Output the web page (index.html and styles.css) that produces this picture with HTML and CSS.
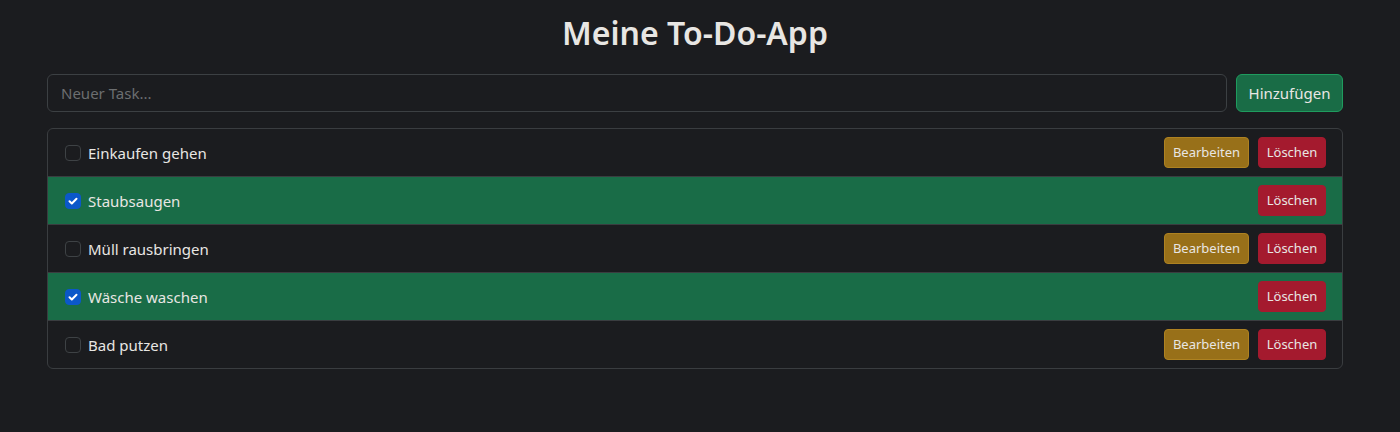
FILE: index.html
```html
<!DOCTYPE html>
<html lang="de">
<head>
<meta charset="utf-8">
<title>Meine To-Do-App</title>
<link rel="stylesheet" href="styles.css">
</head>
<body>
<div class="container">
  <h2 class="title">Meine To-Do-App</h2>
  <div class="add-row">
    <input class="task-input" type="text" placeholder="Neuer Task...">
    <button class="btn btn-success">Hinzufügen</button>
  </div>
  <ul class="list">
    <li class="item">
      <label class="item-label"><span class="check"></span><span class="item-text">Einkaufen gehen</span></label>
      <div class="actions"><button class="btn btn-sm btn-warning">Bearbeiten</button><button class="btn btn-sm btn-danger">Löschen</button></div>
    </li>
    <li class="item done">
      <label class="item-label"><span class="check checked"><svg viewBox="0 0 16 16" width="16" height="16"><path d="M4.5 8.2l2.3 2.3 4.7-4.8" fill="none" stroke="#fff" stroke-width="2" stroke-linecap="round" stroke-linejoin="round"/></svg></span><span class="item-text">Staubsaugen</span></label>
      <div class="actions"><button class="btn btn-sm btn-danger">Löschen</button></div>
    </li>
    <li class="item">
      <label class="item-label"><span class="check"></span><span class="item-text">Müll rausbringen</span></label>
      <div class="actions"><button class="btn btn-sm btn-warning">Bearbeiten</button><button class="btn btn-sm btn-danger">Löschen</button></div>
    </li>
    <li class="item done">
      <label class="item-label"><span class="check checked"><svg viewBox="0 0 16 16" width="16" height="16"><path d="M4.5 8.2l2.3 2.3 4.7-4.8" fill="none" stroke="#fff" stroke-width="2" stroke-linecap="round" stroke-linejoin="round"/></svg></span><span class="item-text">Wäsche waschen</span></label>
      <div class="actions"><button class="btn btn-sm btn-danger">Löschen</button></div>
    </li>
    <li class="item">
      <label class="item-label"><span class="check"></span><span class="item-text">Bad putzen</span></label>
      <div class="actions"><button class="btn btn-sm btn-warning">Bearbeiten</button><button class="btn btn-sm btn-danger">Löschen</button></div>
    </li>
  </ul>
</div>
</body>
</html>
```
FILE: styles.css
```css
* { box-sizing: border-box; }
html, body { margin: 0; }
body {
  background: #1b1c1f;
  color: #e8e6e3;
  font-family: "Noto Sans", "Open Sans", sans-serif;
  font-size: 15px;
  line-height: 1.5;
}
.container {
  width: 1296px;
  margin-left: 47px;
  padding-top: 14px;
}
.title {
  margin: 0 0 22px;
  text-align: center;
  font-size: 32px;
  line-height: 38px;
  font-weight: 600;
  color: #e8e6e3;
}
.add-row {
  display: flex;
  gap: 9px;
  margin-bottom: 16px;
}
.task-input {
  flex: 1;
  height: 38px;
  padding: 6px 13px;
  background: #1b1c1f;
  border: 1px solid #3c4043;
  border-radius: 6px;
  color: #e8e6e3;
  font: inherit;
  outline: none;
}
.task-input::placeholder { color: #6c6e70; }
.btn {
  font-family: inherit;
  font-size: 15px;
  line-height: 24px;
  padding: 6px 0;
  border: 1px solid transparent;
  border-radius: 6px;
  color: #e8e6e3;
  cursor: pointer;
  text-align: center;
}
.btn-success {
  background: #196c46;
  border-color: #1f9c5e;
  width: 107px;
}
.btn-sm {
  font-size: 13px;
  line-height: 21px;
  padding: 4px 0;
  border-radius: 4px;
}
.btn-warning { background: #987019; border-color: #ae8221; width: 85px; }
.btn-danger { background: #a41a2e; border-color: #a41a2e; width: 68px; }
.list {
  list-style: none;
  margin: 0;
  padding: 0;
  border: 1px solid #3a3d40;
  border-radius: 6px;
  overflow: hidden;
}
.item {
  display: flex;
  align-items: center;
  justify-content: space-between;
  height: 48px;
  padding: 0 16px 0 17px;
  border-top: 1px solid #3a3d40;
}
.item:first-child { border-top: 0; height: 47px; }
.item.done { background: #196c47; }
.item-label {
  display: flex;
  align-items: center;
  gap: 7px;
}
.item-text { padding-top: 1px; }
.check {
  width: 16px;
  height: 16px;
  border: 1px solid #3e4245;
  border-radius: 4px;
  background: #1b1c1f;
  display: inline-flex;
}
.check.checked {
  background: #0b58c9;
  border-color: #0b58c9;
}
.check.checked svg { margin: -1px; }
.actions { display: flex; gap: 9px; }
```
